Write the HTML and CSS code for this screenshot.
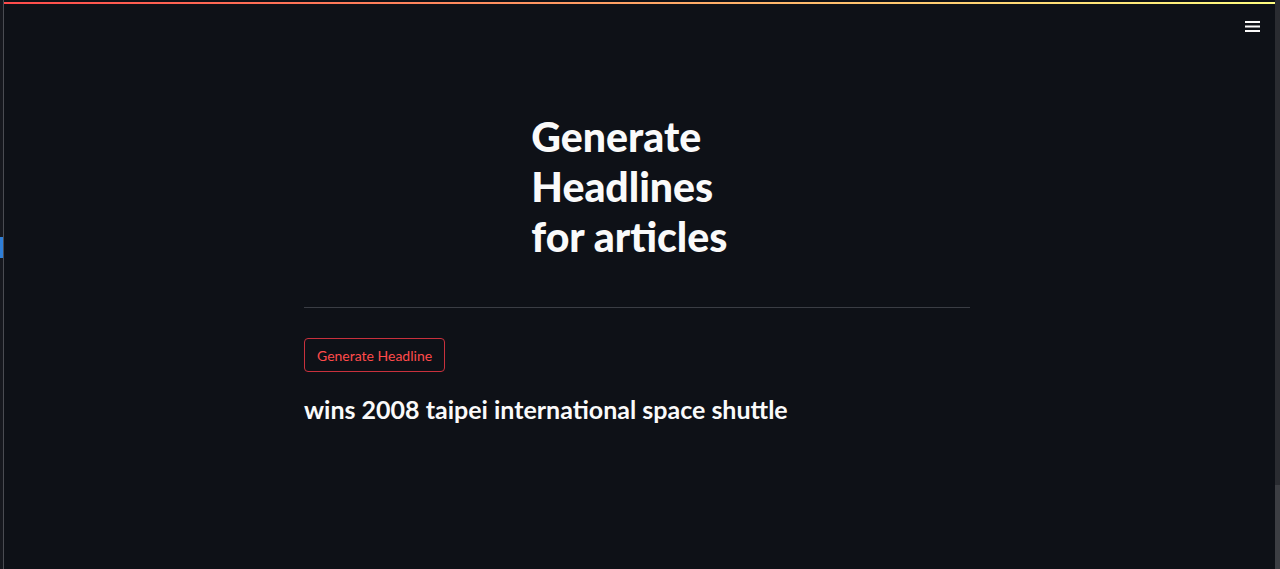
FILE: index.html
```html
<!DOCTYPE html>
<html lang="en">
<head>
    <meta charset="UTF-8">
    <meta name="viewport" content="width=device-width, initial-scale=1.0">
    <title>Generate Headlines</title>
    <link rel="stylesheet" href="styles.css">
</head>
<body>
    <div class="window">
        <div class="edge">
            <div class="edge-mark"></div>
        </div>

        <main class="app">
            <div class="decoration"></div>

            <header class="toolbar">
                <button class="menu" aria-label="Main menu">
                    <svg width="15" height="11" viewBox="0 0 15 11">
                        <rect x="0" y="0" width="15" height="2" fill="#fafafa"></rect>
                        <rect x="0" y="4.5" width="15" height="2" fill="#fafafa"></rect>
                        <rect x="0" y="9" width="15" height="2" fill="#fafafa"></rect>
                    </svg>
                </button>
            </header>

            <section class="block">
                <div class="columns">
                    <div class="column"></div>
                    <div class="column">
                        <h1>Generate Headlines for articles</h1>
                    </div>
                    <div class="column"></div>
                </div>

                <hr class="divider">

                <button class="action">Generate Headline</button>

                <h3 class="result">wins 2008 taipei international space shuttle</h3>
            </section>
        </main>

        <div class="scrollbar">
            <div class="thumb"></div>
        </div>
    </div>
</body>
</html>
```

FILE: styles.css
```css
html, body { margin: 0; height: 100%; }
body { background: #0e1117; color: #fafafa; font-family: Lato, "Open Sans", sans-serif; overflow: hidden; }

.window { display: flex; height: 100vh; }

.edge { width: 3px; background: #16181e; border-right: 1px solid #4a4c52; position: relative; }
.edge-mark { position: absolute; left: 0; top: 237px; width: 3px; height: 21px; background: #2f7fd8; }

.app { flex: 1; position: relative; }
.decoration { position: absolute; top: 2px; left: 0; right: 0; height: 2px; background: linear-gradient(90deg, #ff4b4b, #fffd80); }

.toolbar { display: flex; justify-content: flex-end; padding: 21px 15px 0 0; height: 15px; }
.menu { background: none; border: 0; padding: 0; width: 15px; height: 11px; cursor: pointer; }
.menu svg { display: block; }

.block { width: 666px; margin: 0 auto; padding: 76px 5px 0 0; }
.columns { display: grid; grid-template-columns: repeat(3, 1fr); gap: 16px; }
.column h1 { margin: 0; font-size: 41px; line-height: 50px; font-weight: 900; }

.divider { border: 0; border-top: 1px solid #3a3d44; margin: 45px 0 30px; }

.action { background: #0e1117; color: #ff4b4b; border: 1px solid #c8313d; border-radius: 4px; padding: 0 12px; height: 34px; font-family: inherit; font-size: 14px; cursor: pointer; }

.result { margin: 22px 0 0; font-size: 25px; font-weight: 700; }

.scrollbar { width: 5px; background: #2a2c31; position: relative; }
.thumb { position: absolute; left: 0; right: 0; top: 485px; bottom: 0; background: #3c3e43; }
```
